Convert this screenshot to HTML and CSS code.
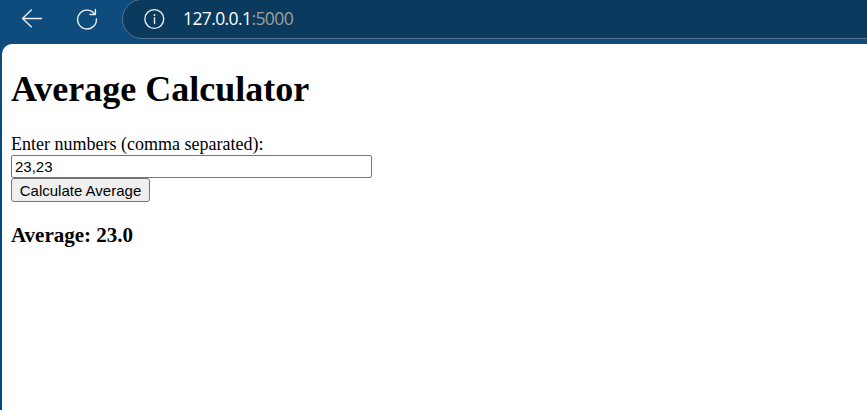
FILE: index.html
```html
<!DOCTYPE html>
<html lang="en">
<head>
<meta charset="utf-8">
<title>Average Calculator</title>
<link rel="stylesheet" href="styles.css">
</head>
<body>
<header class="toolbar">
  <svg class="icon back" width="22" height="20" viewBox="0 0 22 20"><path d="M20.5 10.5H1.5M10.3 2L1.5 10.5l8.8 8.2"/></svg>
  <svg class="icon reload" width="22" height="22" viewBox="0 0 22 22"><path d="M18.6 6A9.4 9.4 0 1 0 20.4 11M19.4 1.5v5h-5.4"/></svg>
  <div class="address">
    <svg class="icon" width="22" height="22" viewBox="0 0 22 22"><circle cx="11.3" cy="11" r="9.4"/><path d="M11.5 9.8v5.7"/><circle class="dot" cx="11.5" cy="6.9" r="1"/></svg>
    <span class="url">127.0.0.1<span class="port">:5000</span></span>
  </div>
</header>
<main class="page">
  <h1>Average Calculator</h1>
  <form>
    <label for="numbers">Enter numbers (comma separated):</label>
    <input id="numbers" type="text" value="23,23">
    <button type="button">Calculate Average</button>
  </form>
  <h3>Average: 23.0</h3>
</main>
</body>
</html>
```
FILE: styles.css
```css
* { box-sizing: border-box; }
body {
  margin: 0;
  height: 410px;
  overflow: hidden;
  display: flex;
  flex-direction: column;
  background: linear-gradient(#0d4c7c 44px, #03477f 240px);
  font-family: "Liberation Serif", "Times New Roman", serif;
  color: #000;
}
.toolbar {
  height: 44px;
  flex: none;
  display: flex;
  align-items: flex-start;
}
.icon {
  flex: none;
  fill: none;
  stroke: #e9f0f5;
  stroke-width: 1.4;
  stroke-linecap: round;
  stroke-linejoin: round;
}
.icon .dot { fill: #e9f0f5; stroke: none; }
.back { margin: 8px 0 0 21px; }
.reload { margin: 8px 0 0 33px; }
.address {
  flex: 1;
  height: 40px;
  margin: -1px -30px 0 24px;
  padding: 0 0 0 20px;
  display: flex;
  align-items: center;
  border: 1px solid #53728c;
  border-radius: 20px;
  background: #0a3a5e;
}
.url {
  margin: 0 0 2px 18px;
  font: 17.5px/24px "Open Sans", sans-serif;
  letter-spacing: -0.6px;
  color: #fff;
}
.port { color: #a29e9e; }
.page {
  flex: 1;
  margin-left: 2px;
  padding: 25px 9px 0;
  border-top-left-radius: 10px;
  background: #fff;
}
h1 {
  margin: 0;
  font-size: 36px;
  line-height: 41px;
}
form {
  margin-top: 24px;
  display: flex;
  flex-direction: column;
  align-items: flex-start;
}
label { font-size: 18px; line-height: 21px; }
input, button {
  margin: 0;
  border: 1px solid #767676;
  border-radius: 2px;
  font: 15px/18px "Liberation Sans", Arial, sans-serif;
  color: #000;
}
input { width: 361px; height: 23px; padding: 1px 3px; background: #fff; }
button {
  width: 139px;
  height: 24px;
  padding: 2px 0 0;
  border-radius: 3px;
  background: #efefef;
  white-space: nowrap;
}
h3 { margin: 21px 0 0; font-size: 21px; line-height: 24px; }
```
